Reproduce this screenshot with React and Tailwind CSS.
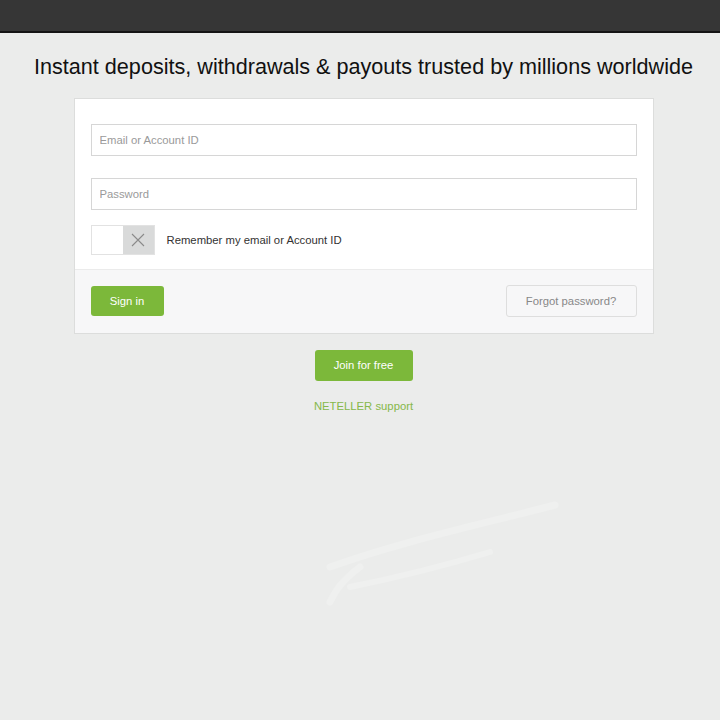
import React from 'react';

function Swoosh() {
  return (
    <svg width="240" height="110" viewBox="0 0 240 110" className="mt-[82px] ml-[320px]" fill="none">
      <path d="M10 70 C 80 45, 150 30, 235 8" stroke="#eff0ef" strokeWidth="7" strokeLinecap="round" />
      <path d="M40 70 C 20 85, 15 95, 10 105" stroke="#eff0ef" strokeWidth="7" strokeLinecap="round" />
      <path d="M30 90 C 80 80, 120 70, 170 55" stroke="#eff0ef" strokeWidth="6" strokeLinecap="round" />
    </svg>
  );
}

export default function App() {
  return (
    <div className="min-h-[720px] bg-[#ebeceb] font-['Liberation_Sans',Arial,sans-serif]">
      <div className="h-[33px] bg-[#363636] border-b-2 border-[#141414]" />

      <div className="pl-[7px]">
        <h1 className="mt-[20px] text-center text-[21.6px] leading-[28px] text-[#111]">
          Instant deposits, withdrawals &amp; payouts trusted by millions worldwide
        </h1>

        <div className="mx-auto mt-[17px] w-[580px] border border-[#dcdddc] bg-white">
          <div className="px-4 pt-[25px] pb-[14px]">
            <input
              placeholder="Email or Account ID"
              className="block h-8 w-full border border-[#d6d6d6] px-2 text-[11.3px] text-[#333] placeholder:text-[#9a9a9a] outline-none"
            />
            <input
              type="password"
              placeholder="Password"
              className="mt-[22px] block h-8 w-full border border-[#d6d6d6] px-2 text-[11.3px] text-[#333] placeholder:text-[#9a9a9a] outline-none"
            />
            <label className="mt-[15px] flex items-center gap-3">
              <span className="flex h-[30px] w-16 border border-[#e2e2e2]">
                <span className="w-1/2 bg-white" />
                <span className="flex w-1/2 items-center justify-center bg-[#d9dada]">
                  <svg width="14" height="14" viewBox="0 0 14 14" stroke="#8a8a8a" strokeWidth="1.1">
                    <path d="M1 1 L13 13 M13 1 L1 13" />
                  </svg>
                </span>
              </span>
              <span className="text-[11.3px] text-[#333]">Remember my email or Account ID</span>
            </label>
          </div>
          <div className="flex items-center justify-between border-t border-[#ebebeb] bg-[#f7f7f8] px-4 pt-[15px] pb-4">
            <button className="h-[30px] w-[73px] rounded-[3px] bg-[#7cb83a] text-[11.3px] text-white">Sign in</button>
            <button className="h-[32px] w-[131px] rounded-[3px] border border-[#dedede] bg-[#f7f7f8] text-[11.3px] text-[#888]">
              Forgot password?
            </button>
          </div>
        </div>

        <div className="mt-4 flex flex-col items-center">
          <button className="h-[31px] w-[98px] rounded-[3px] bg-[#7cb83a] text-[11.3px] text-white">Join for free</button>
          <a className="mt-[17px] text-[11.3px] text-[#86b84a]">NETELLER support</a>
        </div>
      </div>

      <Swoosh />
    </div>
  );
}
